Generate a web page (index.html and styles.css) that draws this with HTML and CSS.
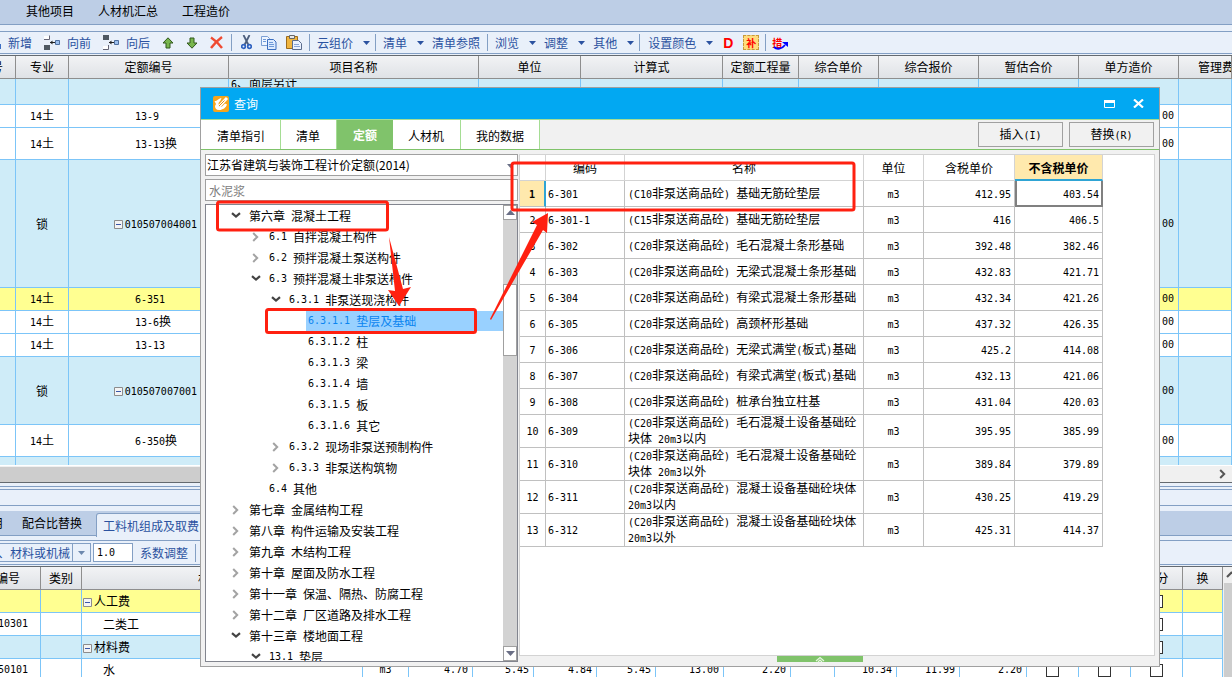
FILE: index.html
```html
<!DOCTYPE html>
<html lang="zh-CN">
<head>
<meta charset="utf-8">
<title>查询</title>
<link rel="stylesheet" href="styles.css">
</head>
<body>
<svg class="defs" aria-hidden="true">
  <symbol id="down" viewBox="0 0 10 7"><path d="M1 1.2 5 4.6 9 1.2" fill="none" stroke="#444" stroke-width="2.2"/></symbol>
  <symbol id="right" viewBox="0 0 7 10"><path d="M1.2 1 5.2 5 1.2 9" fill="none" stroke="#a3a3a3" stroke-width="2"/></symbol>
  <symbol id="caret" viewBox="0 0 7 4"><path d="M0 0h7L3.5 4z" fill="currentColor"/></symbol>
  <symbol id="box" viewBox="0 0 9 9"><path d="M.5.5h8v8h-8z" fill="#f4f4f4" stroke="#8c8c8c"/><path d="M2 4.5h5" stroke="#3a57a8"/></symbol>
</svg>

<main class="app">
  <nav class="menu">
    <a href="#">其他项目</a><a href="#">人材机汇总</a><a href="#">工程造价</a>
  </nav>
  <div class="strip"></div>
  <div class="toolbar">
    <div class="group first">
      <button><i class="stub"></i>新增</button>
      <button><svg width="16" height="15" viewBox="0 0 16 15"><path d="M0 1h5v3H0z" fill="#fff"/><path d="M0 4.500h5.500V.5" fill="none" stroke="#667"/><path d="M0 10h6v5H0z" fill="#4e5862"/><path d="M11.500 5.500h4v4h-4z" fill="#9dc0ee" stroke="#4f6f9e"/><path d="M6 7.500h5" stroke="#222"/><path d="M6 7.500 8.500 5.500v4z" fill="#222"/></svg>向前</button>
      <button><svg width="16" height="15" viewBox="0 0 16 15"><path d="M0 0h6v5H0z" fill="#4e5862"/><path d="M0 11h5v3H0z" fill="#fff"/><path d="M0 14.500h5.500V10" fill="none" stroke="#667"/><path d="M11.500 5.500h4v4h-4z" fill="#9dc0ee" stroke="#4f6f9e"/><path d="M6 7.500h5" stroke="#222"/><path d="M6 7.500 8.500 5.500v4z" fill="#222"/></svg>向后</button>
      <button aria-label="上移"><svg width="12" height="12" viewBox="0 0 12 12"><path d="M6 .8 11 6H8v5H4V6H1z" fill="#78b64d" stroke="#31581d"/></svg></button>
      <button aria-label="下移"><svg width="12" height="12" viewBox="0 0 12 12"><path d="M6 11.200 11 6H8V1H4v5H1z" fill="#78b64d" stroke="#31581d"/></svg></button>
      <button aria-label="删除"><svg width="13" height="13" viewBox="0 0 13 13"><path d="M1 1.500C5 4 9 8 12 12M12 1C8 4 4 8 1 12" stroke="#ef4b32" stroke-width="2.400" fill="none"/></svg></button>
    </div>
    <div class="group edit">
      <button aria-label="剪切"><svg width="11" height="15" viewBox="0 0 11 15"><path d="M2.500 0 7.500 10M8.500 0 3.500 10" stroke="#4d5f7d" stroke-width="1.800"/><circle cx="2.500" cy="11.500" r="1.800" fill="none" stroke="#2f62c0" stroke-width="1.700"/><circle cx="8.500" cy="11.500" r="1.800" fill="none" stroke="#2f62c0" stroke-width="1.700"/></svg></button>
      <button aria-label="复制"><svg width="16" height="14" viewBox="0 0 16 14"><path d="M.5.5h6l2 2v7h-8z" fill="#eef5ff" stroke="#7b9fd4"/><path d="M6.500 3.500h6l2.500 2.500v7.500H6.500z" fill="#dceaff" stroke="#3c6fc0"/><path d="M2 3.500h3M2 5.500h3M8 6.500h4M8 8.500h5M8 10.500h5" stroke="#6f9ad8"/></svg></button>
      <button aria-label="粘贴"><svg width="16" height="15" viewBox="0 0 16 15"><path d="M.5 1.500h11v12H.5z" fill="#f0b53f" stroke="#9c6b1c"/><path d="M3.500.5h5v3h-5z" fill="#e7e7e7" stroke="#666"/><path d="M6.500 5.500h6l3 3v6h-9z" fill="#e9f1ff" stroke="#5b6c8c"/><path d="M8 9.500h5M8 11.500h6" stroke="#8aa5d4"/></svg></button>
    </div>
    <div class="group"><button class="drop">云组价<svg class="caret"><use href="#caret"/></svg></button></div>
    <div class="group"><button class="drop">清单<svg class="caret"><use href="#caret"/></svg></button><button>清单参照</button></div>
    <div class="group"><button class="drop">浏览<svg class="caret"><use href="#caret"/></svg></button><button class="drop">调整<svg class="caret"><use href="#caret"/></svg></button><button class="drop">其他<svg class="caret"><use href="#caret"/></svg></button></div>
    <div class="group color"><button class="drop">设置颜色<svg class="caret"><use href="#caret"/></svg></button><button class="d">D</button><button class="patch">补</button></div>
    <div class="group last"><button class="measure">措<svg width="15" height="8" viewBox="0 0 15 8"><path d="M1 5c3 3 8 2 11-2" fill="none" stroke="#00f" stroke-width="1.800"/><path d="M9 0h6v5z" fill="#00f"/></svg></button></div>
  </div>
  <div class="gap"></div>

  <section class="bills">
    <table class="sheet">
      <colgroup><col class="w16"><col class="w53"><col class="w160"><col class="w250"><col class="w102"><col class="w142"><col class="w76"><col class="w80"><col class="w100"><col class="w100"><col class="w100"><col></colgroup>
      <thead><tr><th class="clip"><div>号</div></th><th>专业</th><th>定额编号</th><th>项目名称</th><th>单位</th><th>计算式</th><th>定额工程量</th><th>综合单价</th><th>综合报价</th><th>暂估合价</th><th>单方造价</th><th class="fee">管理费</th></tr></thead>
      <tbody>
        <tr class="blue h26"><td></td><td></td><td></td><td class="note"><div><span class="n">6</span>、面层另计</div></td><td></td><td></td><td></td><td></td><td></td><td></td><td></td><td></td></tr>
        <tr class="h23"><td></td><td><span class="n">14</span>土</td><td class="code"><span class="n">13-9</span></td><td></td><td></td><td></td><td></td><td></td><td></td><td></td><td class="num">00</td><td></td></tr>
        <tr class="h32"><td></td><td><span class="n">14</span>土</td><td class="code"><span class="n">13-13</span>换</td><td></td><td></td><td></td><td></td><td></td><td></td><td></td><td class="num">00</td><td></td></tr>
        <tr class="blue h128"><td></td><td>锁</td><td class="item"><svg class="minus"><use href="#box"/></svg><span class="n">010507004001</span></td><td></td><td></td><td></td><td></td><td></td><td></td><td></td><td class="num">00</td><td></td></tr>
        <tr class="yellow h23"><td></td><td><span class="n">14</span>土</td><td class="code"><span class="n">6-351</span></td><td></td><td></td><td></td><td></td><td></td><td></td><td></td><td class="num">00</td><td></td></tr>
        <tr class="h23"><td></td><td><span class="n">14</span>土</td><td class="code"><span class="n">13-6</span>换</td><td></td><td></td><td></td><td></td><td></td><td></td><td></td><td class="num">00</td><td></td></tr>
        <tr class="h23"><td></td><td><span class="n">14</span>土</td><td class="code"><span class="n">13-13</span></td><td></td><td></td><td></td><td></td><td></td><td></td><td></td><td class="num">00</td><td></td></tr>
        <tr class="blue h68"><td></td><td>锁</td><td class="item"><svg class="minus"><use href="#box"/></svg><span class="n">010507007001</span></td><td></td><td></td><td></td><td></td><td></td><td></td><td></td><td class="num">00</td><td></td></tr>
        <tr class="h32"><td></td><td><span class="n">14</span>土</td><td class="code"><span class="n">6-350</span>换</td><td></td><td></td><td></td><td></td><td></td><td></td><td></td><td class="num">00</td><td></td></tr>
        <tr class="blue h26"><td></td><td></td><td></td><td></td><td></td><td></td><td></td><td></td><td></td><td></td><td></td><td></td></tr>
      </tbody>
    </table>
  </section>
  <div class="hscroll"><div class="hthumb"></div><svg width="7" height="10"><path d="M1.200 1 5.200 5 1.200 9" fill="none" stroke="#555" stroke-width="2"/></svg></div>

  <section class="detail">
    <div class="lines"></div>
    <div class="band"></div>
    <div class="pad"></div>
    <div class="tabs2"><button>用</button><button>配合比替换</button><button class="on">工料机组成及取费</button></div>
    <div class="pad low"></div>
    <div class="toolbar2">
      <button class="split">、材料或机械</button><button class="arrow" aria-label="更多"><svg class="caret"><use href="#caret"/></svg></button>
      <input class="factor n" aria-label="系数" value="1.0">
      <button class="adjust">系数调整</button>
    </div>
    <div class="gap"></div>
    <div class="lower">
      <table class="sheet">
        <colgroup><col class="w41"><col class="w41"><col><col class="w46"><col class="w64"><col class="w61"><col class="w63"><col class="w59"><col class="w68"><col class="w67"><col class="w44"><col class="w62"><col class="w63"><col class="w67"><col class="w52"><col class="w52"><col class="w52"><col class="w40"></colgroup>
        <thead><tr><th class="clip wide"><div>编号</div></th><th>类别</th><th>材料名称</th><th></th><th></th><th></th><th></th><th></th><th></th><th></th><th></th><th></th><th></th><th></th><th></th><th></th><th class="part">分</th><th>换</th></tr></thead>
        <tbody>
          <tr class="yellow h23"><td></td><td></td><td class="kind"><svg class="minus"><use href="#box"/></svg>人工费</td><td></td><td></td><td></td><td></td><td></td><td></td><td></td><td></td><td></td><td></td><td></td><td><input type="checkbox" aria-label="选"></td><td><input type="checkbox" aria-label="选"></td><td><input type="checkbox" aria-label="选"></td><td></td></tr>
          <tr class="h23"><td class="clip id"><div class="n">10301</div></td><td></td><td class="sub">二类工</td><td></td><td></td><td></td><td></td><td></td><td></td><td></td><td></td><td></td><td></td><td></td><td><input type="checkbox" aria-label="选"></td><td><input type="checkbox" aria-label="选"></td><td><input type="checkbox" aria-label="选"></td><td></td></tr>
          <tr class="blue h23"><td></td><td></td><td class="kind"><svg class="minus"><use href="#box"/></svg>材料费</td><td></td><td></td><td></td><td></td><td></td><td></td><td></td><td></td><td></td><td></td><td></td><td><input type="checkbox" aria-label="选"></td><td><input type="checkbox" aria-label="选"></td><td><input type="checkbox" aria-label="选"></td><td></td></tr>
          <tr class="h23"><td class="clip id"><div class="n">50101</div></td><td></td><td class="sub">水</td><td class="n">m3</td><td class="num">4.70</td><td class="num">5.45</td><td class="num">4.84</td><td class="num">5.45</td><td class="num">13.00</td><td class="num">2.20</td><td></td><td class="num">10.34</td><td class="num">11.99</td><td class="num">2.20</td><td><input type="checkbox" aria-label="选"></td><td><input type="checkbox" aria-label="选"></td><td><input type="checkbox" aria-label="选"></td><td></td></tr>
        </tbody>
      </table>
      <div class="vscroll"><svg width="8" height="16"><path d="M3 10 8 5" stroke="#555" stroke-width="2.200"/></svg><div class="vthumb"></div></div>
    </div>
  </section>
</main>

<section class="dialog" role="dialog" aria-label="查询">
  <header class="title">
    <svg width="16" height="16" viewBox="0 0 16 16"><rect width="16" height="16" rx="2" fill="#f6a51c"/><path d="M1.500 5C4 5.500 5 2.500 8.500 2L7.500 4.500 5.500 7 6 11l3-.5L12 7.500l2 1c-1 3-4 5.500-8 5.500-3 0-4-2-4-4l1-2z" fill="#fff"/><path d="M6 10.500 14 2" stroke="#fff" stroke-width="3"/><path d="M6 10 11.500 4.500" stroke="#e58e12"/></svg>
    <span>查询</span>
    <button aria-label="最大化"><svg width="11" height="8"><path d="M.5.5h10v7H.5z" fill="none" stroke="#fff"/><path d="M0 0h11v3H0z" fill="#fff"/></svg></button>
    <button aria-label="关闭"><svg width="11" height="9"><path d="M1 .5 10 8.500M10 .5 1 8.500" stroke="#fff" stroke-width="2.200"/></svg></button>
  </header>
  <div class="tabs">
    <button class="t1">清单指引</button><button class="t2">清单</button><button class="on">定额</button><button class="t4">人材机</button><button>我的数据</button>
    <div class="actions"><button>插入<span class="n">(I)</span></button><button>替换<span class="n">(R)</span></button></div>
  </div>
  <div class="body">
    <div class="side">
      <div class="pick"><select aria-label="定额库"><option>江苏省建筑与装饰工程计价定额(2014)</option></select><svg class="caret"><use href="#caret"/></svg></div>
      <input class="search" aria-label="搜索" placeholder="水泥浆">
      <div class="treebox">
        <ul class="tree">
          <li><svg class="dn"><use href="#down"/></svg>第六章<span class="n">&nbsp;</span>混凝土工程</li>
          <li class="l1"><svg class="rt"><use href="#right"/></svg><span class="n">6.1&nbsp;</span>自拌混凝土构件</li>
          <li class="l1"><svg class="rt"><use href="#right"/></svg><span class="n">6.2&nbsp;</span>预拌混凝土泵送构件</li>
          <li class="l1"><svg class="dn"><use href="#down"/></svg><span class="n">6.3&nbsp;</span>预拌混凝土非泵送构件</li>
          <li class="l2"><svg class="dn"><use href="#down"/></svg><span class="n">6.3.1&nbsp;</span>非泵送现浇构件</li>
          <li class="l3 sel"><div><span class="n">6.3.1.1&nbsp;</span>垫层及基础</div></li>
          <li class="l3"><div><span class="n">6.3.1.2&nbsp;</span>柱</div></li>
          <li class="l3"><div><span class="n">6.3.1.3&nbsp;</span>梁</div></li>
          <li class="l3"><div><span class="n">6.3.1.4&nbsp;</span>墙</div></li>
          <li class="l3"><div><span class="n">6.3.1.5&nbsp;</span>板</div></li>
          <li class="l3"><div><span class="n">6.3.1.6&nbsp;</span>其它</div></li>
          <li class="l2"><svg class="rt"><use href="#right"/></svg><span class="n">6.3.2&nbsp;</span>现场非泵送预制构件</li>
          <li class="l2"><svg class="rt"><use href="#right"/></svg><span class="n">6.3.3&nbsp;</span>非泵送构筑物</li>
          <li class="l1"><svg class="rt"></svg><span class="n">6.4&nbsp;</span>其他</li>
          <li><svg class="rt"><use href="#right"/></svg>第七章<span class="n">&nbsp;</span>金属结构工程</li>
          <li><svg class="rt"><use href="#right"/></svg>第八章<span class="n">&nbsp;</span>构件运输及安装工程</li>
          <li><svg class="rt"><use href="#right"/></svg>第九章<span class="n">&nbsp;</span>木结构工程</li>
          <li><svg class="rt"><use href="#right"/></svg>第十章<span class="n">&nbsp;</span>屋面及防水工程</li>
          <li><svg class="rt"><use href="#right"/></svg>第十一章<span class="n">&nbsp;</span>保温、隔热、防腐工程</li>
          <li><svg class="rt"><use href="#right"/></svg>第十二章<span class="n">&nbsp;</span>厂区道路及排水工程</li>
          <li><svg class="dn"><use href="#down"/></svg>第十三章<span class="n">&nbsp;</span>楼地面工程</li>
          <li class="l1"><svg class="dn"><use href="#down"/></svg><span class="n">13.1&nbsp;</span>垫层</li>
        </ul>
        <div class="bar">
          <div class="btn"><svg width="9" height="5"><path d="M0 5h9L4.500 0z"/></svg></div>
          <div class="thumb"></div>
          <div class="btn end"><svg width="9" height="5"><path d="M0 0h9L4.500 5z"/></svg></div>
        </div>
      </div>
    </div>
    <div class="result">
      <div class="panel">
        <table class="grid">
          <colgroup><col class="c26"><col class="c79"><col class="c239"><col class="c60"><col class="c91"><col class="c88"></colgroup>
          <thead><tr><th></th><th>编码</th><th>名称</th><th>单位</th><th>含税单价</th><th class="hot">不含税单价</th></tr></thead>
          <tbody>
            <tr><td class="cur">1</td><td>6-301</td><td><span class="n">(C10</span>非泵送商品砼<span class="n">)&nbsp;</span>基础无筋砼垫层</td><td>m3</td><td>412.95</td><td class="focus">403.54</td></tr>
            <tr><td>2</td><td>6-301-1</td><td><span class="n">(C15</span>非泵送商品砼<span class="n">)&nbsp;</span>基础无筋砼垫层</td><td>m3</td><td>416</td><td>406.5</td></tr>
            <tr><td>3</td><td>6-302</td><td><span class="n">(C20</span>非泵送商品砼<span class="n">)&nbsp;</span>毛石混凝土条形基础</td><td>m3</td><td>392.48</td><td>382.46</td></tr>
            <tr><td>4</td><td>6-303</td><td><span class="n">(C20</span>非泵送商品砼<span class="n">)&nbsp;</span>无梁式混凝土条形基础</td><td>m3</td><td>432.83</td><td>421.71</td></tr>
            <tr><td>5</td><td>6-304</td><td><span class="n">(C20</span>非泵送商品砼<span class="n">)&nbsp;</span>有梁式混凝土条形基础</td><td>m3</td><td>432.34</td><td>421.26</td></tr>
            <tr><td>6</td><td>6-305</td><td><span class="n">(C20</span>非泵送商品砼<span class="n">)&nbsp;</span>高颈杯形基础</td><td>m3</td><td>437.32</td><td>426.35</td></tr>
            <tr><td>7</td><td>6-306</td><td><span class="n">(C20</span>非泵送商品砼<span class="n">)&nbsp;</span>无梁式满堂<span class="n">(</span>板式<span class="n">)</span>基础</td><td>m3</td><td>425.2</td><td>414.08</td></tr>
            <tr><td>8</td><td>6-307</td><td><span class="n">(C20</span>非泵送商品砼<span class="n">)&nbsp;</span>有梁式满堂<span class="n">(</span>板式<span class="n">)</span>基础</td><td>m3</td><td>432.13</td><td>421.06</td></tr>
            <tr><td>9</td><td>6-308</td><td><span class="n">(C20</span>非泵送商品砼<span class="n">)&nbsp;</span>桩承台独立柱基</td><td>m3</td><td>431.04</td><td>420.03</td></tr>
            <tr class="two"><td>10</td><td>6-309</td><td><span class="n">(C20</span>非泵送商品砼<span class="n">)&nbsp;</span>毛石混凝土设备基础砼<br>块体<span class="n">&nbsp;20m3</span>以内</td><td>m3</td><td>395.95</td><td>385.99</td></tr>
            <tr class="two"><td>11</td><td>6-310</td><td><span class="n">(C20</span>非泵送商品砼<span class="n">)&nbsp;</span>毛石混凝土设备基础砼<br>块体<span class="n">&nbsp;20m3</span>以外</td><td>m3</td><td>389.84</td><td>379.89</td></tr>
            <tr class="two"><td>12</td><td>6-311</td><td><span class="n">(C20</span>非泵送商品砼<span class="n">)&nbsp;</span>混凝土设备基础砼块体<br><span class="n">20m3</span>以内</td><td>m3</td><td>430.25</td><td>419.29</td></tr>
            <tr class="two"><td>13</td><td>6-312</td><td><span class="n">(C20</span>非泵送商品砼<span class="n">)&nbsp;</span>混凝土设备基础砼块体<br><span class="n">20m3</span>以外</td><td>m3</td><td>425.31</td><td>414.37</td></tr>
          </tbody>
        </table>
      </div>
      <button class="handle" aria-label="展开"><svg width="10" height="6"><path d="M1 5 5 1.500 9 5M3 6 5 4 7 6" fill="none" stroke="#e6f6df" stroke-width="1.200"/></svg></button>
    </div>
  </div>
</section>

<svg class="marks" width="860" height="340" aria-hidden="true">
  <g fill="none" stroke="#ff2010" stroke-width="3">
    <rect x="217.500" y="202" width="170" height="28" rx="2"/>
    <rect x="266.500" y="309.500" width="209" height="23" rx="2"/>
    <rect x="512" y="163" width="342" height="47" rx="2"/>
  </g>
  <g fill="#ff2010">
    <path d="M389 237 403 289 411 287 399 306 388 290 395 291Z"/>
    <path d="M490 319 537 225 532 222 548 213 547 233 543 230 491 320Z"/>
  </g>
</svg>
</body>
</html>
```
FILE: styles.css
```css
* { box-sizing: border-box; }
body { margin: 0; font: 12px/14px "Noto Sans CJK SC", sans-serif; color: #000; overflow: hidden; }
button, input, select { font: inherit; color: inherit; margin: 0; padding: 0; border: 0; background: none; border-radius: 0; outline: 0; white-space: nowrap; }
a { color: inherit; text-decoration: none; }
svg { display: block; flex: none; }
.defs { position: absolute; width: 0; height: 0; }
.n, .num { font-family: "DejaVu Sans Mono", monospace; font-size: 10px; }
.caret { width: 7px; height: 4px; }

.app { display: flex; flex-direction: column; height: 100vh; overflow: hidden; background: #e9f0fa; }
.menu { display: flex; gap: 24px; padding: 4px 26px; height: 25px; background: #bdcee6; border-bottom: 1px solid #839fc4; }
.strip { height: 7px; border-bottom: 1px solid #839fc4; }
.toolbar { display: flex; align-items: center; height: 22px; color: #2b52a0; border-bottom: 1px solid #839fc4; }
.toolbar button { display: flex; align-items: center; gap: 7px; }
.group { display: flex; align-items: center; gap: 8px; height: 17px; padding: 0 5px 0 7px; border-right: 1px solid #839fc4; }
.group.first { gap: 12px; padding: 0 8px 0 0; }
.group.edit { gap: 9px; padding: 0 7px 0 9px; }
.group.color { gap: 10px; padding: 0 6px 0 8px; }
.group.last { border: 0; padding-left: 6px; }
.group:nth-child(4) { padding-right: 7px; }
.toolbar .drop { gap: 10px; }
.stub { width: 1px; height: 5px; margin-top: 8px; background: #3d6fc4; }
.toolbar .d { color: #f00; font: bold 14px/14px "Liberation Sans", sans-serif; }
.toolbar .patch { justify-content: center; width: 16px; height: 15px; color: #f00; font-size: 10px; line-height: 12px; font-weight: bold; background: #ffdc7c; border: 1px dashed #c79a3c; }
.toolbar .measure { gap: 0; color: #f00; font-size: 10px; line-height: 12px; font-weight: bold; }
.toolbar .measure svg { margin: 6px 0 0 -9px; }
.gap { height: 2px; border-bottom: 1px solid #646a70; }

.sheet { width: 100%; table-layout: fixed; border-collapse: separate; border-spacing: 0; background: #fff; }
.sheet th { height: 23px; padding: 0; overflow: hidden; font-weight: normal; white-space: nowrap; background: linear-gradient(#f2f3f5, #dfe2e6); border-right: 1px solid #8e8e8e; border-bottom: 1px solid #8e8e8e; }
.sheet td { padding: 0; text-align: center; white-space: nowrap; border-right: 1px solid #7cc5f8; border-bottom: 1px solid #7cc5f8; overflow: hidden; }
.sheet .blue { background: #cfecf8; }
.sheet .yellow { background: #ffff91; }
.sheet .num { text-align: right; padding-right: 4px; }
.sheet .fee { text-align: left; padding-left: 19px; }
.sheet .part { padding-left: 12px; }
.sheet .code { text-align: left; padding-left: 66px; }
.item .minus, .kind .minus { display: inline-block; vertical-align: middle; }
.minus { width: 9px; height: 9px; margin-right: 2px; }
.sheet .item { text-align: right; padding-right: 31px; }
.sheet .kind { text-align: left; padding-left: 1px; }
.sheet .sub { text-align: left; padding-left: 21px; }
.clip div { display: flex; justify-content: flex-end; padding-right: 12px; }
.clip.wide div { padding-right: 20px; }
.sheet .note { text-align: left; vertical-align: top; padding-left: 2px; }
.note div { height: 12px; line-height: 8px; overflow: hidden; }
.h23 { height: 23px; } .h26 { height: 26px; } .h32 { height: 32px; } .h68 { height: 68px; } .h128 { height: 128px; }
.w16 { width: 16px; } .w40 { width: 40px; } .w41 { width: 41px; } .w44 { width: 44px; } .w46 { width: 46px; }
.w52 { width: 52px; } .w53 { width: 53px; } .w59 { width: 59px; } .w61 { width: 61px; } .w62 { width: 62px; }
.w63 { width: 63px; } .w64 { width: 64px; } .w67 { width: 67px; } .w68 { width: 68px; } .w76 { width: 76px; }
.w80 { width: 80px; } .w100 { width: 100px; } .w102 { width: 102px; } .w142 { width: 142px; } .w160 { width: 160px; } .w250 { width: 250px; }

.bills { flex: 1; min-height: 0; overflow: hidden; }
.hscroll { display: flex; align-items: center; justify-content: space-between; height: 17px; padding-right: 6px; background: #f0f0f0; border-top: 1px solid #fff; }
.hthumb { width: 60%; height: 15px; background: #cdcdcd; }
.detail { height: 195px; }
.lines { height: 8px; margin-bottom: -1px; border-top: 1px solid #646a70; border-bottom: 1px solid #839fc4; box-shadow: inset 0 -2px #e9f0fa, inset 0 -3px #839fc4; }
.band { height: 17px; border-bottom: 1px solid #839fc4; }
.pad { height: 5px; }
.pad.low { border-bottom: 1px solid #839fc4; }
.tabs2 { display: flex; height: 25px; background: #bdcee6; border-bottom: 1px solid #839fc4; }
.tabs2 button { padding: 0 14px 0 7px; }
.tabs2 button:first-child { display: flex; align-items: center; justify-content: flex-end; width: 15px; padding: 0 12px 0 0; overflow: hidden; }
.tabs2 .on { height: 24px; margin-top: 2px; padding-left: 6px; color: #2b52a0; background: #e9f0fa; border: 1px solid #839fc4; border-bottom: 0; border-radius: 3px 3px 0 0; }
.toolbar2 { display: flex; align-items: center; height: 24px; color: #2b52a0; border-bottom: 1px solid #839fc4; }
.toolbar2 .split { width: 73px; height: 19px; padding-right: 2px; display: flex; align-items: center; justify-content: flex-end; border: 1px solid #839fc4; border-left: 0; }
.toolbar2 .arrow { display: flex; align-items: center; justify-content: center; width: 18px; height: 19px; color: #6d88ad; border: 1px solid #839fc4; border-left: 0; }
.toolbar2 .factor { width: 40px; height: 19px; margin: 0 7px 0 2px; padding-left: 3px; color: #000; background: #fff; border: 1px solid #839fc4; }
.toolbar2 .adjust { height: 18px; padding-right: 7px; border-right: 1px solid #839fc4; }
.lower { display: flex; height: 111px; overflow: hidden; }
.lower .sheet { flex: 1; min-width: 0; align-self: flex-start; }
.lower input { display: block; appearance: none; width: 13px; height: 13px; margin: 0 auto; border: 1px solid #333; background: #fff; }
.vscroll { width: 9px; padding-left: 1px; background: #f0f0f0; }
.vthumb { height: 100px; background: #cdcdcd; }

.dialog { position: absolute; left: 200px; right: 72px; top: 87px; bottom: 10px; display: flex; flex-direction: column; background: #f1f1f1; border: 1px solid #a0a0a0; }
.title { display: flex; align-items: center; gap: 5px; height: 31px; padding: 0 15px 0 12px; color: #fff; background: #02a8f2; }
.title span { flex: 1; }
.title button + button { margin-left: 13px; }
.tabs { display: flex; height: 31px; border-top: 1px solid #a5dd94; border-bottom: 1px solid #7fc36a; }
.tabs > button { padding: 3px 15px 0; background: #fff; border-right: 1px solid #a5dd94; }
.tabs > .t1 { padding-left: 16px; }
.tabs > .t2, .tabs > .t4 { padding-right: 16px; }
.tabs > .on { color: #fff; font-weight: bold; background: #80c36b; padding: 1px 16px 0; border: 0; }
.actions { display: flex; gap: 6px; margin-left: auto; padding: 2px 5px 2px 0; }
.actions button { width: 85px; border: 1px solid #a0a0a0; }
.body { flex: 1; min-height: 0; display: flex; gap: 1px; padding: 4px; }
.side { width: 313px; display: flex; flex-direction: column; gap: 3px; }
.pick { position: relative; }
.pick select { width: 100%; height: 22px; padding-left: 1px; appearance: none; background: #fff; border: 1px solid #a0a0a0; display: block; }
.pick .caret { position: absolute; right: 4px; top: 10px; color: #6a6f86; }
.search { height: 22px; padding-left: 3px; background: #fff; border: 1px solid #a0a0a0; }
.search::placeholder { color: #808080; opacity: 1; }
.treebox { flex: 1; min-height: 0; display: flex; background: #fff; border: 1px solid #82858f; }
.tree { flex: 1; margin: 0; padding: 0; list-style: none; overflow: hidden; }
.tree li { display: flex; align-items: center; height: 21px; padding-left: 25px; white-space: pre; }
.tree .l1 { padding-left: 45px; } .tree .l2 { padding-left: 65px; } .tree .l3 { padding-left: 100px; }
.dn { width: 10px; height: 7px; margin-right: 8px; }
.rt { width: 7px; height: 10px; margin: 0 10px 0 1px; }
.l3 div { flex: 1; display: flex; align-items: center; height: 20px; padding-left: 2px; }
.sel div { color: #0a84f0; background: #99d1ff; }
.bar { width: 14px; display: flex; flex-direction: column; background: #d3d3d3; }
.btn { display: flex; align-items: center; justify-content: center; height: 15px; background: #fff; border: 1px solid #a0a0a0; }
.btn svg { fill: #6a6f86; }
.btn.end { margin-top: auto; }
.thumb { height: 72px; margin-top: 64px; background: #fff; border: 1px solid #a0a0a0; }
.result { flex: 1; min-width: 0; display: flex; flex-direction: column; }
.panel { flex: 1; min-height: 0; overflow: hidden; background: #fff; border: 1px solid #d3d3d3; }
.handle { align-self: center; display: flex; justify-content: center; width: 86px; height: 6px; margin-right: 35px; background: #80c36b; }
.grid { table-layout: fixed; width: 583px; border-collapse: separate; border-spacing: 0; }
.grid th { height: 26px; padding: 1px 0 0; font-weight: normal; border-right: 1px solid #d3d3d3; border-bottom: 1px solid #d3d3d3; }
.grid .hot { font-weight: bold; background: #ffe9ad; border-bottom: 2px solid #2fa4d4; }
.grid td { height: 26px; padding: 2px 2px 0; border-right: 1px solid #c0c0c0; border-bottom: 1px solid #c0c0c0; white-space: nowrap; font: 10px/14px "DejaVu Sans Mono", monospace; text-align: center; }
.grid td:nth-child(2) { text-align: left; }
.grid td:nth-child(3) { padding: 0 0 0 3px; text-align: left; font: 12px/14px "Noto Sans CJK SC", sans-serif; }
.grid td:nth-child(5), .grid td:nth-child(6) { text-align: right; padding-right: 3px; }
.grid .two td { height: 33px; }
.grid td.cur { font-weight: bold; background: #ffe9ad; border-right: 2px solid #2fa4d4; }
.grid td.focus { padding: 3px 2px 0; border: 2px solid #808080; border-top: 0; }
.c26 { width: 26px; } .c60 { width: 60px; } .c79 { width: 79px; } .c88 { width: 88px; } .c91 { width: 91px; } .c239 { width: 239px; }
.marks { position: absolute; left: 0; top: 0; pointer-events: none; }
```
